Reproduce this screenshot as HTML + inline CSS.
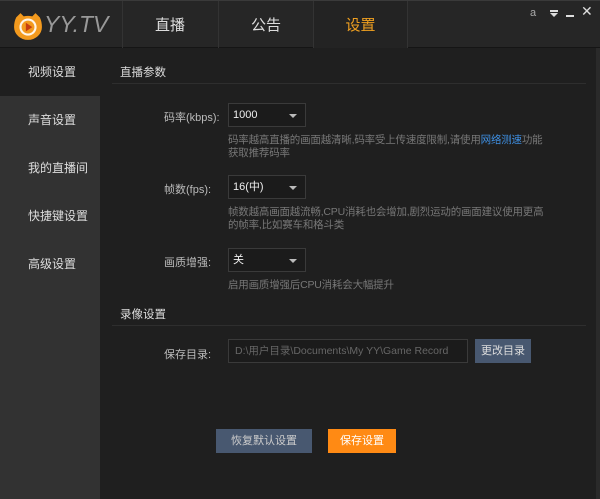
<!DOCTYPE html>
<html><head><meta charset="utf-8"><style>
*{margin:0;padding:0;box-sizing:border-box}
body{width:600px;height:499px;background:#1f1f1f;font-family:"Liberation Sans","Noto Sans CJK SC",sans-serif;color:#ccc;position:relative;overflow:hidden;font-size:12px}
.hdr{position:absolute;left:0;top:0;width:600px;height:48px;background:#262626;border-bottom:1px solid #151515;border-top:1px solid #3a3a3a}
.tab{position:absolute;top:0;height:47px;width:95px;text-align:center;line-height:50px;font-size:15px;color:#ddd;border-left:1px solid #333}
.side{position:absolute;left:0;top:48px;width:100px;height:451px;background:#323232}
.side div{height:48px;line-height:48px;padding-left:28px;font-size:12px;color:#ddd}
.side .sel{background:#1f1f1f}
.a{position:absolute}
.sec{position:absolute;left:112px;width:474px;border-bottom:1px solid #2e2e2e;font-size:11.5px;color:#ddd;height:20px}
.lbl{position:absolute;font-size:11px;color:#bbb}
.sel2{position:absolute;left:228px;width:78px;height:24px;border:1px solid #3a3a3a;background:#1b1b1b;color:#eee;font-size:11px;line-height:22px;padding-left:4px}
.sel2:after{content:"";position:absolute;right:8px;top:10px;border-left:4px solid transparent;border-right:4px solid transparent;border-top:4px solid #bbb}
.hint{position:absolute;left:228px;font-size:10.5px;color:#777;line-height:13px;width:318px;letter-spacing:-0.2px}
.btn{position:absolute;height:24px;line-height:24px;text-align:center;font-size:11px;color:#ddd}
</style></head><body>
<div class="hdr">
<svg class="a" style="left:13px;top:10px" width="30" height="30" viewBox="0 0 28 28"><path d="M3 6 L7 2 L10 5 Q14 4 18 5 L21 2 L25 6 Q27 10 27 15 A13 12 0 0 1 1 15 Q1 10 3 6Z" fill="#f39a1e"/><circle cx="14" cy="15" r="8" fill="#fff" opacity=".9"/><circle cx="14" cy="15" r="6" fill="#f39a1e"/><path d="M12 11 L18 15 L12 19Z" fill="#c63d10"/></svg>
<div class="a" style="left:44px;top:10px;font-size:23px;color:#999;font-style:italic">YY.TV</div>
<div class="tab" style="left:122px">直播</div>
<div class="tab" style="left:218px">公告</div>
<div class="tab" style="left:313px;color:#f0a020;background:#232323;border-right:1px solid #333">设置</div>
<div class="a" style="left:530px;top:6px;font-size:11px;color:#aaa">a</div>
<div class="a" style="left:550px;top:9px;width:8px;height:2px;background:#ddd"></div>
<div class="a" style="left:550px;top:12px;border-left:4px solid transparent;border-right:4px solid transparent;border-top:4px solid #ddd"></div>
<div class="a" style="left:566px;top:14px;width:8px;height:2px;background:#ddd"></div>
<div class="a" style="left:581px;top:2px;font-size:14px;color:#ddd">✕</div>
</div>
<div class="side"><div class="sel">视频设置</div><div>声音设置</div><div>我的直播间</div><div>快捷键设置</div><div>高级设置</div></div>
<div class="sec" style="top:64px;padding-left:8px">直播参数</div>
<div class="lbl" style="left:164px;top:109px">码率(kbps):</div>
<div class="sel2" style="top:103px">1000</div>
<div class="hint" style="top:134px">码率越高直播的画面越清晰,码率受上传速度限制,请使用<span style="color:#3e8ee0">网络测速</span>功能获取推荐码率</div>
<div class="lbl" style="left:164px;top:181px">帧数(fps):</div>
<div class="sel2" style="top:175px">16(中)</div>
<div class="hint" style="top:206px">帧数越高画面越流畅,CPU消耗也会增加,剧烈运动的画面建议使用更高的帧率,比如赛车和格斗类</div>
<div class="lbl" style="left:164px;top:254px">画质增强:</div>
<div class="sel2" style="top:248px">关</div>
<div class="hint" style="top:279px">启用画质增强后CPU消耗会大幅提升</div>
<div class="sec" style="top:306px;padding-left:8px">录像设置</div>
<div class="lbl" style="left:164px;top:346px">保存目录:</div>
<div class="a" style="left:228px;top:339px;width:240px;height:24px;border:1px solid #3a3a3a;background:#1b1b1b;color:#666;font-size:10.5px;line-height:22px;padding-left:6px;white-space:nowrap;overflow:hidden">D:\用户目录\Documents\My YY\Game Record</div>
<div class="btn" style="left:475px;top:339px;width:56px;background:#485870;color:#ddd">更改目录</div>
<div class="btn" style="left:216px;top:429px;width:96px;background:#485870;color:#ccc">恢复默认设置</div>
<div class="btn" style="left:328px;top:429px;width:68px;background:#ff8a14;color:#fff">保存设置</div>
<div class="a" style="left:596px;top:48px;width:4px;height:451px;background:#2a2a2a"></div>
</body></html>
